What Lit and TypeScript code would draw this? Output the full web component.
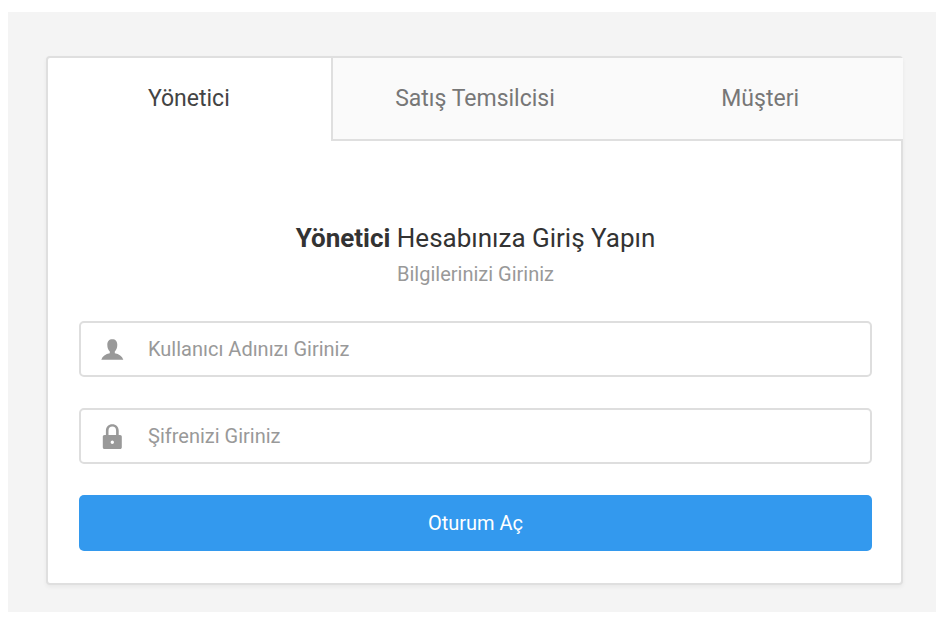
import { LitElement, html, css, svg } from "lit";
import { customElement, state } from "lit/decorators.js";
import { classMap } from "lit/directives/class-map.js";

const TABS = ["Yönetici", "Satış Temsilcisi", "Müşteri"];

const userIcon = svg`<path d="M12.300 3.200c3.200 0 5 2 5 5.500 0 3-1 5.400-2.500 6.700v1.800c4.200.7 7.400 2.900 8.500 6.600h-22c1.100-3.700 4.300-5.900 8.500-6.600v-1.800C8.300 14.100 7.300 11.700 7.300 8.700c0-3.500 1.800-5.500 5-5.500z"/>`;
const lockIcon = svg`<path fill-rule="evenodd" d="M5.900 12V7.700C5.900 3.800 8.600 1.200 12.300 1.200s6.400 2.600 6.400 6.500V12h1.300c1.200 0 1.800.7 1.800 1.800v10.400c0 1.200-.6 1.800-1.800 1.800H4.600c-1.200 0-1.800-.6-1.800-1.800V13.800c0-1.100.6-1.800 1.800-1.800zm2.600 0h7.600V7.700c0-2.600-1.500-4.100-3.800-4.100S8.500 5.100 8.500 7.700zM12.300 17.500a1.700 1.700 0 1 0 0 3.400 1.700 1.700 0 0 0 0-3.400z"/>`;

@customElement("app-root")
export class AppRoot extends LitElement {
  @state() private active = 0;

  static styles = css`
    :host {
      display: block;
      padding: 12px 6px 8px 8px;
      background: #fff;
      font-family: Roboto, sans-serif;
      color: #333;
    }
    .page {
      padding: 44px 33px 27px 38px;
      background: #f4f4f4;
    }
    .card {
      background: #fff;
      border: 2px solid #dfdfdf;
      border-radius: 4px;
      box-shadow: 0 2px 4px rgba(0, 0, 0, 0.05);
    }
    .tabs {
      display: grid;
      grid-template-columns: repeat(3, 1fr);
      margin: 0 -2px;
    }
    .tab {
      height: 83px;
      padding: 0;
      border: 0;
      border-bottom: 2px solid #dfdfdf;
      background: #fafafa;
      color: #777;
      font: 400 23px/28px Roboto, sans-serif;
      cursor: pointer;
    }
    .tab.active {
      background: transparent;
      border-color: transparent;
      color: #444;
    }
    .tab.active + .tab {
      margin-left: -1px;
      border-left: 2px solid #dfdfdf;
    }
    .form {
      display: flex;
      flex-direction: column;
      gap: 31px;
      padding: 79px 29px 32px 31px;
    }
    .intro {
      text-align: center;
    }
    .title {
      margin: 0;
      font-size: 26px;
      line-height: 36px;
      font-weight: 400;
    }
    .subtitle {
      margin: 0;
      padding: 4px 0 1px;
      color: #999;
      font-size: 20px;
      line-height: 29px;
    }
    .field {
      display: flex;
      align-items: center;
      gap: 24px;
      height: 56px;
      box-sizing: border-box;
      padding: 0 19px;
      border: 2px solid #dedede;
      border-radius: 5px;
    }
    .icon {
      flex: none;
      width: 24px;
      height: 26px;
      fill: #999;
    }
    .input {
      flex: 1;
      min-width: 0;
      padding: 0;
      border: 0;
      outline: 0;
      background: transparent;
      color: #333;
      font: 400 20px/28px Roboto, sans-serif;
    }
    .input::placeholder {
      color: #999;
      opacity: 1;
    }
    .submit {
      height: 56px;
      border: 0;
      border-radius: 5px;
      background: #3399ee;
      color: #fff;
      font: 400 20px/28px Roboto, sans-serif;
      cursor: pointer;
    }
  `;

  render() {
    return html`
      <main class="page">
        <section class="card">
          <div class="tabs" role="tablist">
            ${TABS.map(
              (name, i) => html`<button
                class=${classMap({ tab: true, active: i === this.active })}
                type="button"
                role="tab"
                aria-selected=${i === this.active}
                @click=${() => (this.active = i)}
              >${name}</button>`
            )}
          </div>
          <form class="form" @submit=${(e: Event) => e.preventDefault()}>
            <div class="intro">
              <h1 class="title"><strong>${TABS[this.active]}</strong> Hesabınıza Giriş Yapın</h1>
              <p class="subtitle">Bilgilerinizi Giriniz</p>
            </div>
            <label class="field">
              <svg class="icon" viewBox="0 0 24 26" aria-hidden="true">${userIcon}</svg>
              <input class="input" type="text" aria-label="Kullanıcı Adınızı Giriniz" placeholder="Kullanıcı Adınızı Giriniz" />
            </label>
            <label class="field">
              <svg class="icon" viewBox="0 0 24 26" aria-hidden="true">${lockIcon}</svg>
              <input class="input" type="password" aria-label="Şifrenizi Giriniz" placeholder="Şifrenizi Giriniz" />
            </label>
            <button class="submit" type="submit">Oturum Aç</button>
          </form>
        </section>
      </main>
    `;
  }
}
